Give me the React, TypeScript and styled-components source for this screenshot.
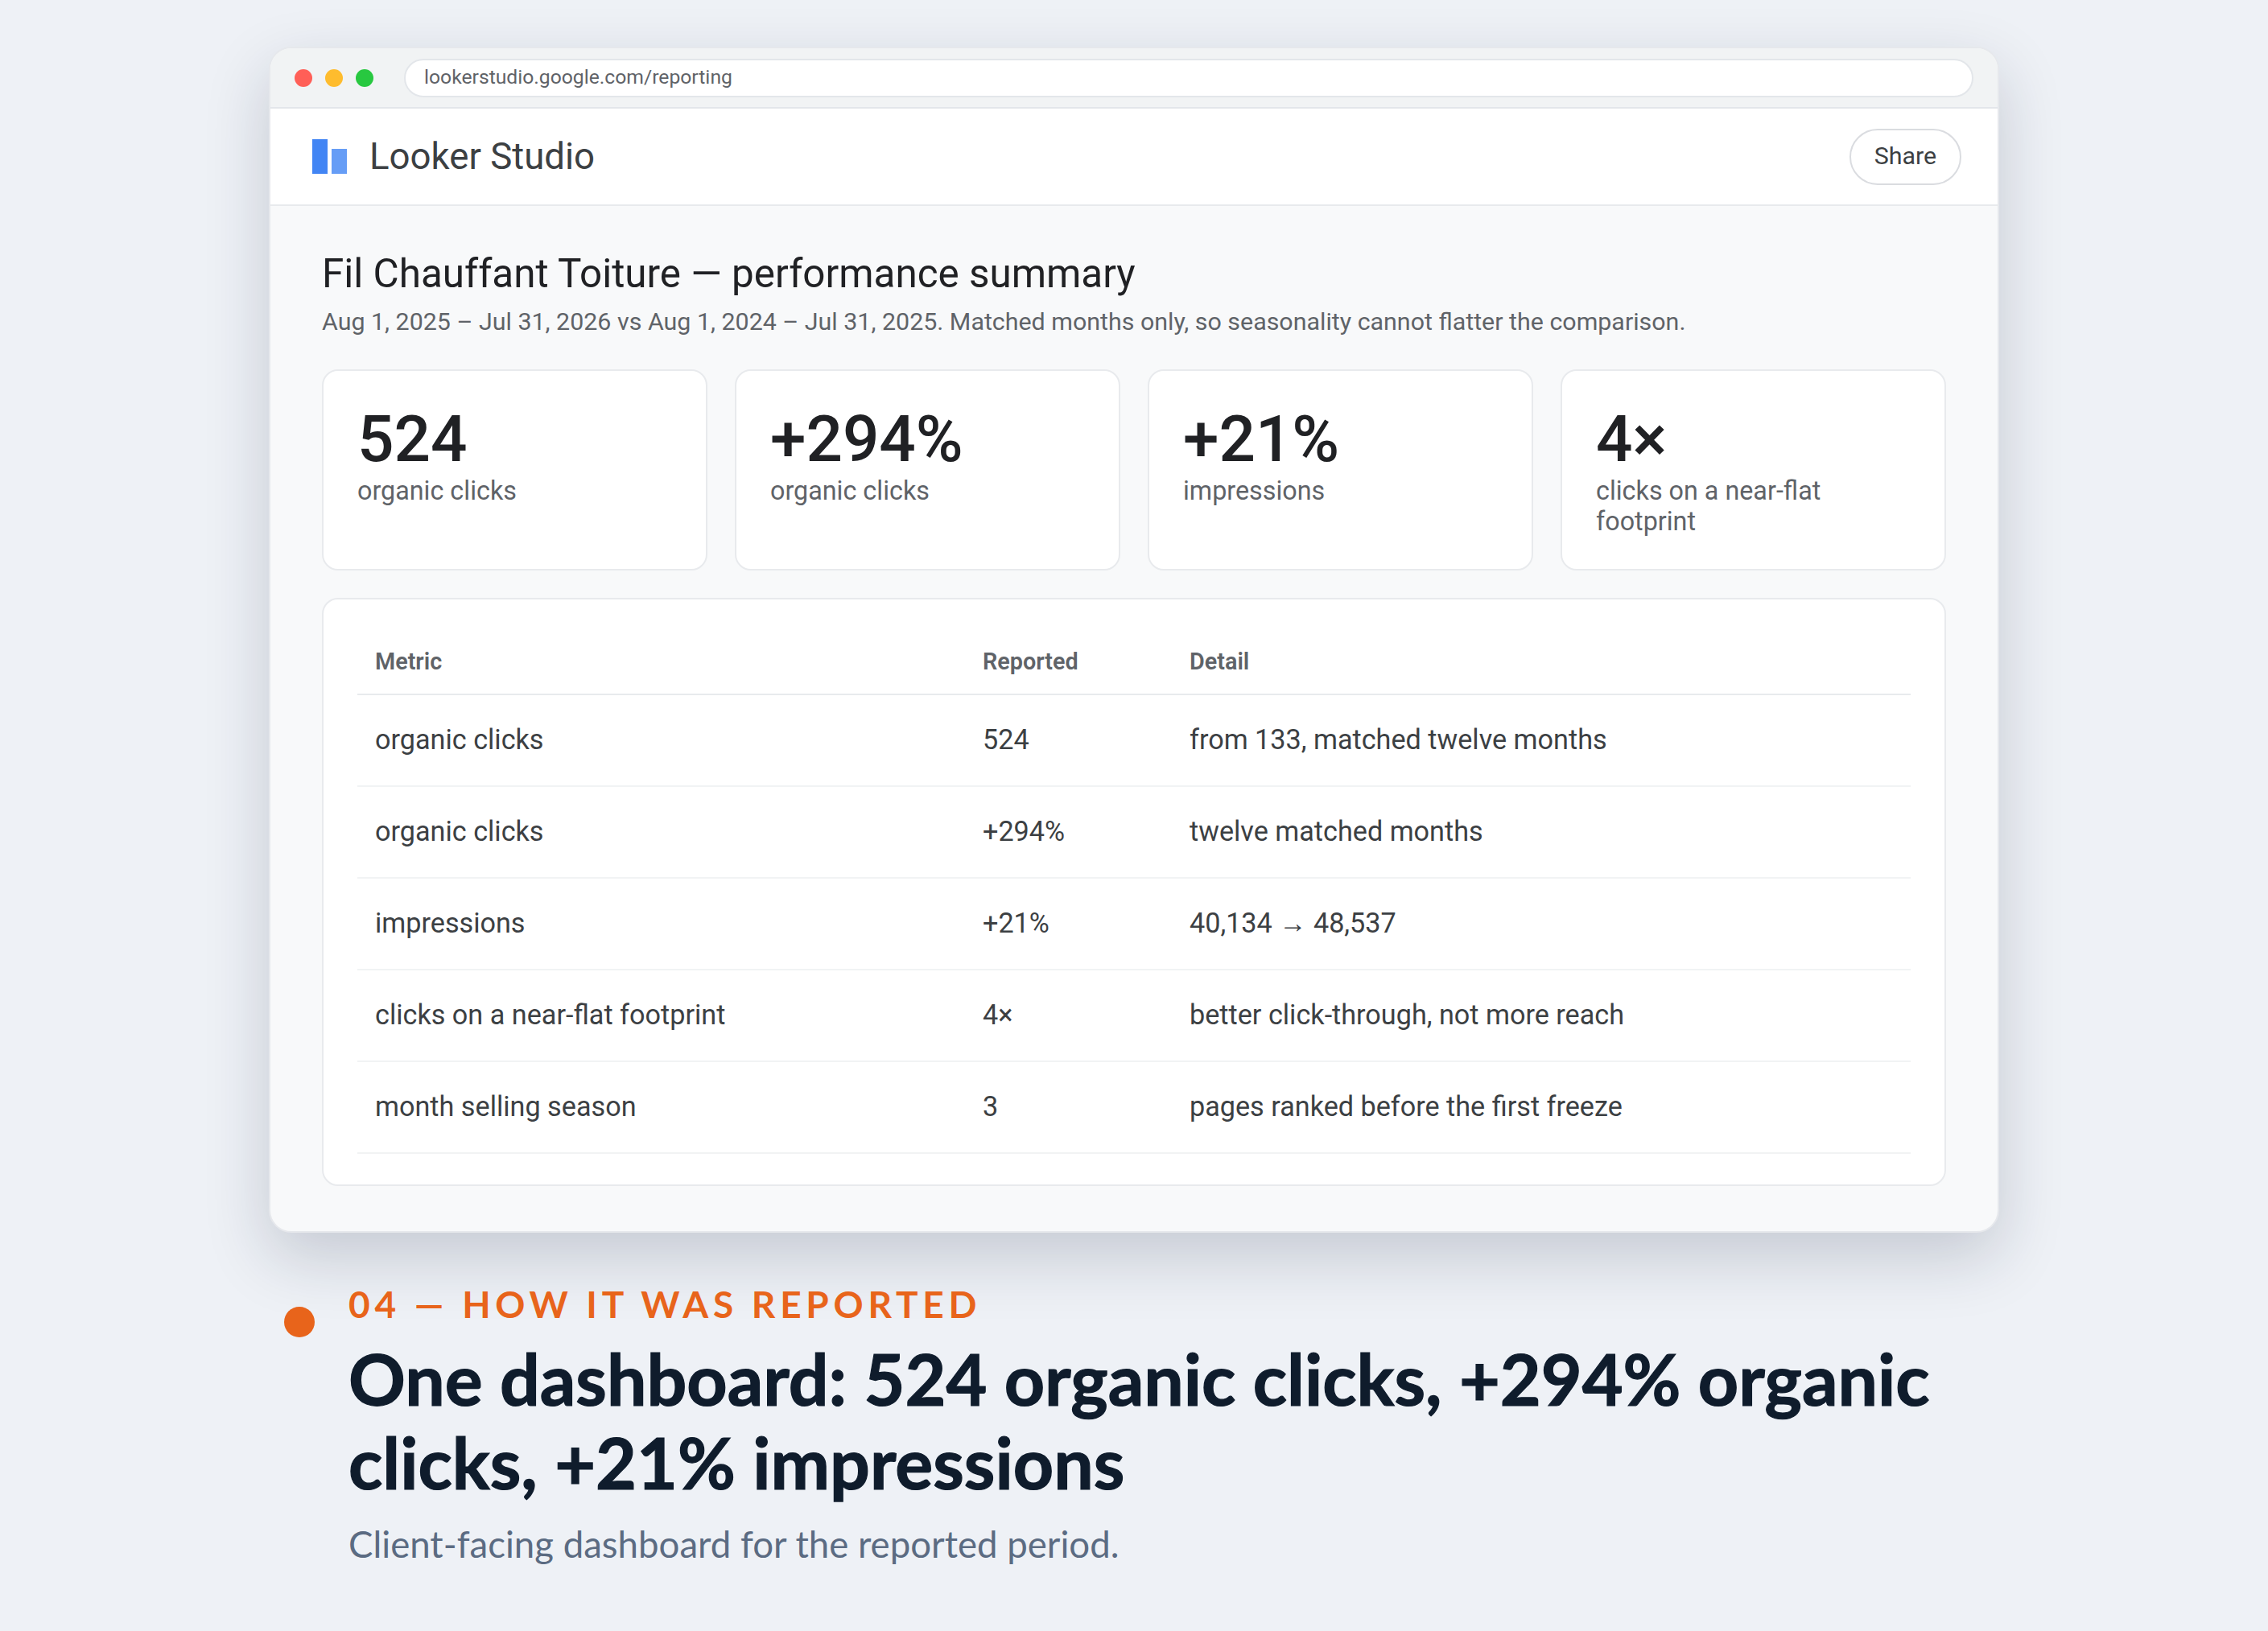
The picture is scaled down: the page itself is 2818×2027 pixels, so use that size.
import { createGlobalStyle } from "styled-components";
import styled from "styled-components";

const stats = [
  { value: "524", label: "organic clicks" },
  { value: "+294%", label: "organic clicks" },
  { value: "+21%", label: "impressions" },
  { value: "4×", label: "clicks on a near-flat footprint" },
];

const rows = [
  { metric: "organic clicks", reported: "524", detail: "from 133, matched twelve months" },
  { metric: "organic clicks", reported: "+294%", detail: "twelve matched months" },
  { metric: "impressions", reported: "+21%", detail: "40,134 → 48,537" },
  { metric: "clicks on a near-flat footprint", reported: "4×", detail: "better click-through, not more reach" },
  { metric: "month selling season", reported: "3", detail: "pages ranked before the first freeze" },
];

export default function App() {
  return (
    <>
      <GlobalStyle />
      <Page>
        <BrowserWindow>
          <TitleBar>
            <Dots>
              <Dot $color="#ff5f57" />
              <Dot $color="#febc2e" />
              <Dot $color="#28c840" />
            </Dots>
            <UrlBar>lookerstudio.google.com/reporting</UrlBar>
          </TitleBar>
          <AppHeader>
            <Brand>
              <svg width="43" height="43" viewBox="0 0 43 43" aria-hidden="true">
                <rect x="0" y="0" width="19" height="43" fill="#4285f4" />
                <rect x="24" y="12" width="19" height="31" fill="#669df6" />
              </svg>
              <BrandName>Looker Studio</BrandName>
            </Brand>
            <ShareButton>Share</ShareButton>
          </AppHeader>
          <Report>
            <ReportTitle>Fil Chauffant Toiture — performance summary</ReportTitle>
            <ReportMeta>
              Aug 1, 2025 – Jul 31, 2026 vs Aug 1, 2024 – Jul 31, 2025. Matched months only, so seasonality
              cannot flatter the comparison.
            </ReportMeta>
            <StatGrid>
              {stats.map((s) => (
                <StatCard key={s.value}>
                  <StatValue>{s.value}</StatValue>
                  <StatLabel>{s.label}</StatLabel>
                </StatCard>
              ))}
            </StatGrid>
            <TableCard>
              <Table>
                <thead>
                  <tr>
                    <HeadCell $width="755px">Metric</HeadCell>
                    <HeadCell $width="257px">Reported</HeadCell>
                    <HeadCell>Detail</HeadCell>
                  </tr>
                </thead>
                <tbody>
                  {rows.map((r, i) => (
                    <tr key={i}>
                      <Cell>{r.metric}</Cell>
                      <Cell>{r.reported}</Cell>
                      <Cell>{r.detail}</Cell>
                    </tr>
                  ))}
                </tbody>
              </Table>
            </TableCard>
          </Report>
        </BrowserWindow>
        <Caption>
          <CaptionDot />
          <CaptionText>
            <Eyebrow>04 — HOW IT WAS REPORTED</Eyebrow>
            <Headline>One dashboard: 524 organic clicks, +294% organic clicks, +21% impressions</Headline>
            <Subline>Client-facing dashboard for the reported period.</Subline>
          </CaptionText>
        </Caption>
      </Page>
    </>
  );
}

const GlobalStyle = createGlobalStyle`
  html, body {
    margin: 0;
    padding: 0;
    background: #eef1f6;
  }
  * {
    box-sizing: border-box;
  }
`;

const Page = styled.div`
  width: 2818px;
  height: 2027px;
  overflow: hidden;
  padding: 58px 334px 0;
  background: #eef1f6;
  font-family: Roboto, "Liberation Sans", sans-serif;
`;

const BrowserWindow = styled.div`
  height: 1474px;
  border: 2px solid #e6e8ec;
  border-radius: 28px;
  background: #f8f9fa;
  overflow: hidden;
  box-shadow: 0 30px 80px rgba(20, 30, 60, 0.19);
  display: flex;
  flex-direction: column;
`;

const TitleBar = styled.div`
  height: 75px;
  flex: none;
  display: flex;
  align-items: center;
  gap: 38px;
  padding: 0 30px 0 30px;
  background: #f1f3f4;
  border-bottom: 2px solid #e3e6ea;
`;

const Dots = styled.div`
  display: flex;
  gap: 16px;
`;

const Dot = styled.span<{ $color: string }>`
  width: 22px;
  height: 22px;
  border-radius: 50%;
  background: ${(p) => p.$color};
`;

const UrlBar = styled.div`
  flex: 1;
  height: 48px;
  display: flex;
  align-items: center;
  padding: 0 23px 2px;
  background: #fff;
  border: 2px solid #e3e6ea;
  border-radius: 24px;
  font-size: 24.7px;
  color: #5f6368;
`;

const AppHeader = styled.header`
  height: 121px;
  flex: none;
  display: flex;
  align-items: center;
  justify-content: space-between;
  padding: 0 45px 0 52px;
  background: #fff;
  border-bottom: 2px solid #e8eaed;
`;

const Brand = styled.div`
  display: flex;
  align-items: center;
  gap: 28px;
`;

const BrandName = styled.span`
  font-size: 45.6px;
  color: #3c4043;
`;

const ShareButton = styled.button`
  width: 139px;
  height: 70px;
  padding: 0 0 2px;
  background: #fff;
  border: 2px solid #dadce0;
  border-radius: 35px;
  font-family: inherit;
  font-size: 30.4px;
  color: #3c4043;
`;

const Report = styled.main`
  flex: 1;
  padding: 52px 64px 0;
`;

const ReportTitle = styled.h1`
  margin: 0;
  font-size: 49.4px;
  font-weight: 400;
  line-height: 64px;
  color: #202124;
`;

const ReportMeta = styled.p`
  margin: 8px 0 0;
  font-size: 30.4px;
  line-height: 40px;
  color: #5f6368;
`;

const StatGrid = styled.div`
  display: grid;
  grid-template-columns: repeat(4, 1fr);
  gap: 34px;
  margin-top: 39px;
`;

const StatCard = styled.div`
  height: 250px;
  padding: 43px 42px 0;
  background: #fff;
  border: 2px solid #e8eaed;
  border-radius: 20px;
`;

const StatValue = styled.div`
  font-size: 80px;
  font-weight: 500;
  line-height: 84px;
  color: #202124;
`;

const StatLabel = styled.div`
  margin-top: 3px;
  font-size: 32.3px;
  line-height: 38px;
  color: #5f6368;
`;

const TableCard = styled.div`
  height: 731px;
  margin-top: 34px;
  padding: 42px;
  background: #fff;
  border: 2px solid #e8eaed;
  border-radius: 20px;
`;

const Table = styled.table`
  width: 100%;
  border-collapse: collapse;
  table-layout: fixed;
`;

const HeadCell = styled.th<{ $width?: string }>`
  width: ${(p) => p.$width ?? "auto"};
  height: 76px;
  padding: 0 23px 5px 22px;
  border-bottom: 2px solid #e8eaed;
  text-align: left;
  font-size: 28.8px;
  font-weight: 600;
  color: #5f6368;
`;

const Cell = styled.td`
  height: 114px;
  padding: 0 23px 3px 22px;
  border-bottom: 2px solid #f1f3f4;
  font-size: 34.2px;
  color: #3c4043;
`;

const Caption = styled.section`
  display: flex;
  align-items: flex-start;
  gap: 42px;
  margin: 61px 0 0 0;
  padding-left: 19px;
`;

const CaptionDot = styled.span`
  flex: none;
  width: 38px;
  height: 38px;
  margin-top: 31px;
  border-radius: 50%;
  background: #e8641b;
`;

const CaptionText = styled.div`
  font-family: Lato, "Liberation Sans", sans-serif;
  flex: none;
  width: 1990px;
`;

const Eyebrow = styled.div`
  font-size: 46px;
  font-weight: 700;
  line-height: 56px;
  letter-spacing: 0.125em;
  color: #e8641b;
`;

const Headline = styled.h2`
  margin: 12px 0 0;
  font-size: 87.8px;
  font-weight: 700;
  line-height: 104px;
  color: #0f1c2c;
  -webkit-text-stroke: 1.2px #0f1c2c;
`;

const Subline = styled.p`
  margin: 20px 0 0;
  font-size: 45.6px;
  font-weight: 400;
  line-height: 60px;
  color: #5b6b82;
`;
